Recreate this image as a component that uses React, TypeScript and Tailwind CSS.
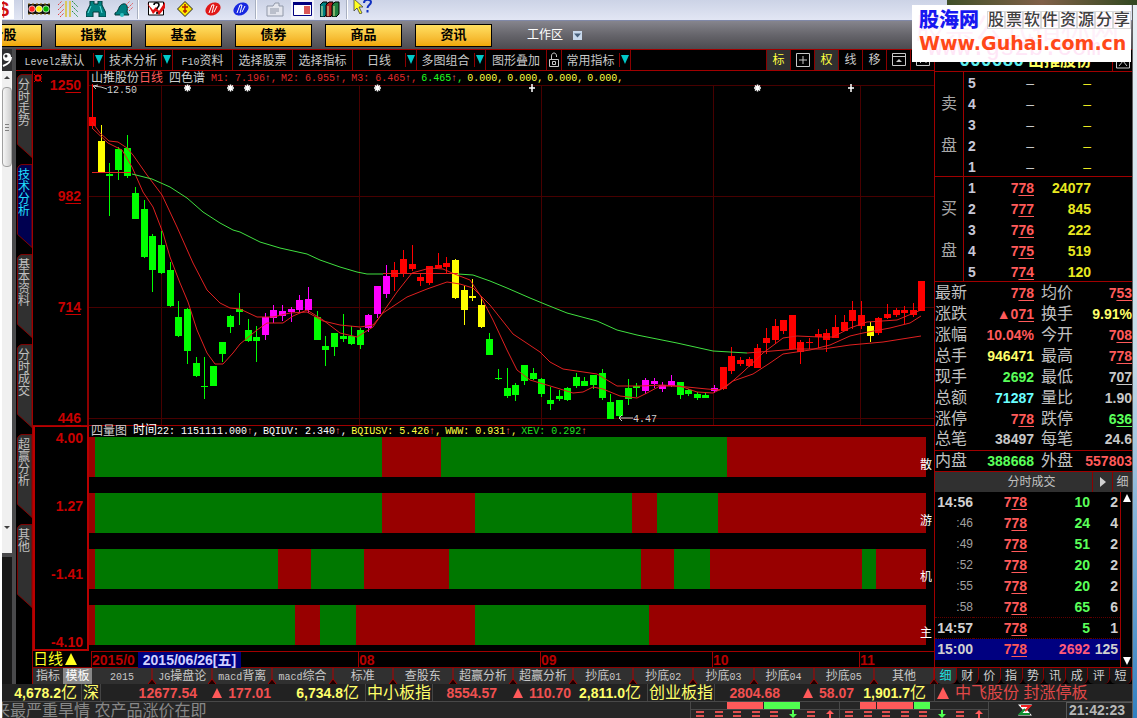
import { useState } from 'react'
import type { ReactNode } from 'react'

const RED = '#ff0000'
const GREEN = '#00ff00'
const PINK = '#ff00ff'
const YELLOW = '#ffff00'

type Candle = [high: number, open: number, close: number, low: number, color: string]

const candles: Candle[] = [
  [84, 117, 126, 128, RED], [125, 141, 173, 173, YELLOW], [163, 174, 176, 216, GREEN], [147, 149, 170, 180, GREEN],
  [135, 148, 176, 178, GREEN], [187, 193, 219, 219, GREEN], [200, 209, 257, 258, GREEN], [234, 236, 270, 292, GREEN],
  [231, 245, 273, 274, GREEN], [262, 270, 306, 307, GREEN], [301, 317, 336, 337, GREEN], [308, 309, 351, 364, GREEN],
  [357, 363, 376, 377, GREEN], [357, 386, 387, 399, GREEN], [366, 366, 386, 386, GREEN], [342, 342, 354, 362, GREEN],
  [315, 316, 327, 333, GREEN], [293, 309, 312, 325, GREEN], [319, 330, 341, 342, GREEN], [326, 337, 341, 362, GREEN],
  [313, 317, 335, 340, PINK], [305, 310, 318, 323, PINK], [305, 311, 316, 321, PINK], [307, 309, 312, 322, PINK],
  [295, 300, 310, 313, PINK], [287, 299, 310, 313, PINK], [311, 317, 340, 340, GREEN], [336, 346, 350, 366, GREEN],
  [333, 333, 347, 356, GREEN], [314, 336, 339, 342, GREEN], [326, 336, 344, 345, GREEN], [328, 330, 345, 349, GREEN],
  [314, 315, 328, 332, PINK], [286, 286, 314, 318, PINK], [265, 276, 294, 298, PINK], [262, 270, 277, 291, RED],
  [250, 259, 274, 277, RED], [245, 264, 269, 271, RED], [273, 277, 281, 286, RED], [266, 266, 283, 285, RED],
  [253, 265, 268, 268, RED], [257, 263, 267, 273, RED], [259, 260, 298, 299, YELLOW], [286, 290, 310, 325, YELLOW],
  [279, 296, 298, 301, YELLOW], [297, 305, 327, 328, YELLOW], [333, 339, 355, 355, GREEN], [369, 378, 379, 380, GREEN],
  [368, 388, 396, 398, GREEN], [383, 385, 395, 401, GREEN], [365, 365, 381, 385, GREEN], [368, 373, 379, 380, GREEN],
  [378, 379, 394, 397, GREEN], [387, 400, 404, 410, GREEN], [390, 396, 399, 401, GREEN], [387, 388, 400, 401, GREEN],
  [373, 377, 386, 388, GREEN], [377, 381, 386, 386, GREEN], [375, 375, 385, 389, GREEN], [369, 373, 398, 400, GREEN],
  [394, 402, 419, 419, GREEN], [400, 400, 416, 418, GREEN], [379, 388, 399, 405, GREEN], [383, 386, 388, 397, GREEN],
  [378, 380, 391, 394, PINK], [378, 381, 384, 388, PINK], [382, 385, 389, 392, PINK], [375, 381, 386, 387, PINK],
  [382, 382, 395, 399, GREEN], [389, 390, 394, 396, GREEN], [392, 394, 398, 400, GREEN], [393, 395, 398, 398, GREEN],
  [385, 388, 391, 393, PINK], [367, 367, 389, 390, RED], [347, 356, 371, 374, RED], [357, 360, 364, 366, RED],
  [357, 359, 366, 367, RED], [344, 348, 368, 368, RED], [328, 338, 343, 354, RED], [319, 326, 340, 344, RED],
  [320, 320, 331, 334, RED], [315, 315, 349, 349, RED], [340, 342, 352, 364, RED], [338, 342, 343, 349, RED],
  [329, 334, 337, 348, RED], [329, 333, 340, 352, RED], [315, 327, 338, 338, RED], [315, 322, 331, 331, RED],
  [301, 310, 321, 329, RED], [301, 315, 326, 329, RED], [322, 326, 336, 342, YELLOW], [317, 318, 333, 335, RED],
  [304, 314, 318, 319, RED], [308, 310, 315, 317, RED], [306, 310, 313, 324, RED], [303, 310, 315, 317, RED],
  [281, 281, 311, 311, RED],
]

const fastLine =
  '92,128 108,143 122,150 132,167 143,192 153,207 163,233 170,257 180,283 188,302 197,330 207,353 215,364 223,364 233,353 240,344 257,330 267,323 283,323 293,316 307,310 323,320 340,333 357,337 373,327 383,312 397,292 412,273 430,268 443,269 457,275 470,280 480,295 493,320 507,350 517,370 530,380 557,388 573,393 583,392 593,387 603,389 620,396 637,398 647,393 660,386 680,386 697,392 713,393 727,386 743,372 763,353 783,338 797,336 820,337 833,337 850,328 867,322 897,320 921,310'
const slowLine =
  '92,122 100,133 109,141 118,142 127,148 133,155 147,175 162,195 177,227 193,263 207,290 220,303 230,308 240,309 257,317 273,317 290,313 307,312 323,321 340,325 360,327 373,325 383,313 407,297 427,289 447,282 460,284 473,288 490,305 513,334 540,352 550,362 563,369 597,374 617,386 640,386 663,385 687,387 707,389 720,390 733,381 753,374 770,363 783,354 810,350 830,345 850,336 863,333 890,328 910,323 921,316'
const greenLine1 =
  '132,174 152,179 170,187 187,198 203,212 220,223 233,230 240,232 260,242 280,248 307,254 320,260 340,267 357,272 367,274 383,274'
const greenLine2 =
  '458,274 473,275 490,281 507,288 530,298 547,305 567,313 597,321 617,330 637,335 677,343 713,351 747,353'

const gridX = [161, 359, 541, 713, 860]
const gridY = [85, 196, 307, 418]

// widths of the strips, starting with green and alternating with red
const strips = [
  { label: '散户', parts: [287, 59, 286, 199] },
  { label: '游资', parts: [287, 93, 157, 25, 61, 208] },
  { label: '机构', parts: [183, 33, 53, 85, 192, 33, 36, 152, 14, 50] },
  { label: '主力', parts: [200, 25, 36, 119, 174, 277] },
]

const markets = ['个股', '指数', '基金', '债券', '商品', '资讯']

const menuItems = [
  { label: 'Level2默认', width: 'w-[89px]', arrow: true },
  { label: '技术分析', width: 'w-[68px]', arrow: true },
  { label: 'F10资料', width: 'w-[60px]' },
  { label: '选择股票', width: 'w-[60px]' },
  { label: '选择指标', width: 'w-[60px]' },
  { label: '日线', width: 'w-[64px]', arrow: true },
  { label: '多图组合', width: 'w-[69px]', arrow: true },
  { label: '图形叠加', width: 'w-[61px]' },
  { label: 'lock', width: 'w-[15px]' },
  { label: '常用指标', width: 'w-[69px]', arrow: true },
]

const sideTabs = ['分时走势', '技术分析', '基本资料', '分时成交', '超赢分析', '其他']

const templateTabs = [
  '2015', 'JG操盘论', 'macd背离', 'macd综合', '标准', '查股东', '超赢分析', '超赢分析',
  '抄底01', '抄底02', '抄底03', '抄底04', '抄底05', '其他',
]

const quoteTabs = ['细', '财', '价', '指', '势', '讯', '成', '评', '短']

const bids = [
  ['1', '778', '24077'],
  ['2', '777', '845'],
  ['3', '776', '222'],
  ['4', '775', '519'],
  ['5', '774', '120'],
]

const C = {
  red: 'text-[#ff5a5a]',
  yellow: 'text-[#ffff6a]',
  green: 'text-[#5aff5a]',
  cyan: 'text-[#6affff]',
  gray: 'text-[#c8c8c8]',
}

const stats = [
  ['最新', '778', C.red, true, '均价', '753', C.red, true],
  ['涨跌', '▲071', C.red, true, '换手', '9.91%', C.yellow, false],
  ['涨幅', '10.04%', C.red, false, '今开', '708', C.red, true],
  ['总手', '946471', C.yellow, false, '最高', '778', C.red, true],
  ['现手', '2692', C.green, false, '最低', '707', C.gray, true],
  ['总额', '71287', C.cyan, false, '量比', '1.90', C.gray, false],
  ['涨停', '778', C.red, true, '跌停', '636', C.green, true],
  ['总笔', '38497', C.gray, false, '每笔', '24.6', C.gray, false],
  ['内盘', '388668', C.green, false, '外盘', '557803', C.red, false],
] as const

const ticks = [
  ['14:56', '10', '2'],
  [':46', '24', '4'],
  [':49', '51', '2'],
  [':52', '20', '2'],
  [':55', '20', '2'],
  [':58', '65', '6'],
  ['14:57', '5', '1'],
  ['15:00', '2692', '125'],
]

// Chinese at 12px, latin characters half as wide
function Label({ text }: { text: string }) {
  return (
    <span className="whitespace-nowrap text-xs">
      {text.split(/([\x20-\x7e]+)/).filter(Boolean).map((part, i) =>
        /[\x20-\x7e]/.test(part) ? (
          <span key={i} className="font-['Liberation_Mono',monospace] text-[10px]">{part}</span>
        ) : (
          part
        )
      )}
    </span>
  )
}

function Cents({ value }: { value: string }) {
  return (
    <>
      {value.slice(0, -2)}
      <span className="underline decoration-1 underline-offset-2">{value.slice(-2)}</span>
    </>
  )
}

function DownArrow() {
  return (
    <svg className="h-2.5 w-2" viewBox="0 0 8 10">
      <path d="M0 0h8L4 9z" fill="#00c8c8" />
    </svg>
  )
}

function ToolIcon({ label, width, children }: { label: string; width: number; children: ReactNode }) {
  return (
    <button aria-label={label} className="h-4 shrink-0">
      <svg width={width} height="16" viewBox={`0 0 ${width} 16`}>{children}</svg>
    </button>
  )
}

function ToolSep() {
  return <span className="h-5 w-0.5 border-l border-[#a8b0c0] bg-white" />
}

function Toolbar() {
  return (
    <div className="flex h-[21px] items-center overflow-hidden border-b border-[#8088a8] bg-gradient-to-b from-[#ccd3e6] to-[#e2e6f4] pb-0.5">
      <div className="flex h-5 w-3 items-center bg-white text-xl font-black leading-5 text-[#d01010]">
        <span className="-ml-1">$</span>
      </div>
      <span className="w-2" />
      <ToolSep />
      <div className="flex items-center gap-2 pl-1">
        <ToolIcon label="红绿灯" width={22}>
          <path d="M0 3h22v10H0z" fill="#101010" />
          <path d="M0 3h22M0 13h22" stroke="#806000" strokeDasharray="2 2" />
          <circle cx="4" cy="8" r="3.2" fill="#ff2020" stroke="#fff" strokeWidth=".7" />
          <circle cx="11" cy="8" r="3.2" fill="#f8f000" stroke="#fff" strokeWidth=".7" />
          <circle cx="18" cy="8" r="3.2" fill="#00b000" stroke="#fff" strokeWidth=".7" />
        </ToolIcon>
        <ToolIcon label="条纹" width={20}>
          <path d="M0 4l4-4M0 9l6-6M0 14l6-6M2 16l4-4" stroke="#e04040" strokeDasharray="2 1" />
          <path d="M8 0v16M12 0v16" stroke="#d8c860" strokeWidth="2" />
          <path d="M14 0l6 6M14 5l6 6M14 10l6 6" stroke="#209040" strokeDasharray="2 1" />
        </ToolIcon>
        <ToolIcon label="望远镜" width={20}>
          <path d="M4 0h4v3h4V0h4v4l4 8v4h-7v-5H7v5H0v-4l4-8z" fill="#008080" stroke="#003838" />
          <path d="M5 5l-3 7M14 5l2 7" stroke="#60e0e0" />
        </ToolIcon>
        <ToolIcon label="铃" width={19}>
          <path d="M1 12c4-1 3-8 8-9 4-1 5 3 4 8l2 3H1z" fill="#008080" stroke="#003838" />
          <circle cx="8" cy="14" r="2" fill="#30c0c0" />
          <path d="M12 4l4-4M14 7l5-5M15 10l4-4" stroke="#e05050" strokeDasharray="2 1" />
        </ToolIcon>
      </div>
      <span className="w-1" />
      <ToolSep />
      <div className="flex items-center gap-3 pl-2">
        <ToolIcon label="疑问走势" width={18}>
          <path d="M1.500 1h15v13h-15z" fill="#fff" stroke="#000" />
          <path d="M0 2l6 7 3-3 3 4 6-9v6l-6 7-3-4-3 3z" fill="#e01010" />
          <path d="M7 4c0-3 5-3 5 0 0 2-2 2-2 4M10 11v2" fill="none" stroke="#000" strokeWidth="1.6" />
        </ToolIcon>
        <ToolIcon label="菱形" width={16}>
          <path d="M8 .5L15.500 8 8 15.500.5 8z" fill="#ffe800" stroke="#202020" />
          <path d="M8 3v9M5 6h6M6 10h4" stroke="#b02000" strokeWidth="1.500" />
        </ToolIcon>
        <ToolIcon label="红色标志" width={16}>
          <ellipse cx="8" cy="8" rx="8" ry="6" transform="rotate(-30 8 8)" fill="#e01818" />
          <path d="M4 12l3-8h2l-2 8M9 11l3-6" stroke="#fff" fill="none" />
        </ToolIcon>
        <ToolIcon label="蓝色标志" width={16}>
          <ellipse cx="8" cy="8" rx="8" ry="6" transform="rotate(-30 8 8)" fill="#1828e0" />
          <path d="M4 12l3-8h2l-2 8M9 11l3-6" stroke="#fff" fill="none" />
        </ToolIcon>
      </div>
      <span className="w-1.5" />
      <ToolSep />
      <div className="flex items-center gap-1.5 pl-2">
        <ToolIcon label="便签" width={20}>
          <path d="M2 5h6l2-3h4v3h4v10H2z" fill="#e4e6ee" stroke="#9098a8" />
          <path d="M5 8h9M5 10h9M5 12h6" stroke="#9098a8" />
        </ToolIcon>
        <div className="flex h-5 items-center bg-[#f2f4fa] px-0.5">
          <ToolIcon label="窗口" width={19}>
            <path d="M.5 1.500h18v13H.5z" fill="#fff" stroke="#000080" />
            <path d="M0 1h19v3H0z" fill="#000080" />
            <path d="M11 6h6M11 8h6M11 10h6M11 12h6" stroke="#d02020" strokeWidth="1.500" />
          </ToolIcon>
        </div>
        <ToolIcon label="书" width={20}>
          <path d="M0 4l3-3h4v12l-3 3H0z" fill="#008080" stroke="#000" />
          <path d="M6 4l3-3h4v12l-3 3H6z" fill="#b02020" stroke="#000" />
          <path d="M12 4l3-3h4v12l-3 3h-4z" fill="#208040" stroke="#000" />
          <path d="M2 5v10M8 5v10M14 5v10" stroke="#e8e8a0" />
        </ToolIcon>
      </div>
      <span className="w-1.5" />
      <ToolSep />
      <div className="pl-1">
        <ToolIcon label="帮助" width={22}>
          <path d="M2 1v12l3-3 3 6 2-1-3-6h4z" fill="#ffff20" stroke="#404040" strokeWidth=".8" />
          <path d="M12 5c0-4 7-4 7-1 0 3-3.500 3-3.500 6M15.500 12v2.500" fill="none" stroke="#1030c0" strokeWidth="2" />
        </ToolIcon>
      </div>
    </div>
  )
}

function MarketBar() {
  return (
    <div className="flex h-7 items-center gap-[13px] overflow-hidden bg-gradient-to-b from-[#86858d] via-[#66656b] to-[#4c4b50]">
      {markets.map((m, i) => (
        <button
          key={m}
          className={`h-[23px] w-[77px] shrink-0 border border-black bg-gradient-to-b from-[#ffe060] to-[#f0a800] text-[13px] font-bold text-black ${i === 0 ? '-ml-[37px]' : ''}`}
        >
          {m}
        </button>
      ))}
      <button className="ml-[22px] flex items-center gap-2.5 text-xs text-white">
        工作区
        <svg className="h-[9px] w-[9px]" viewBox="0 0 9 9">
          <path d="M0 0h9v9H0z" fill="#c8d8ec" />
          <path d="M1 2.500h7L4.500 6.500z" fill="#48607c" />
        </svg>
      </button>
    </div>
  )
}

// strip of the window behind, on the left edge
function LeftStrip() {
  return (
    <div className="flex w-3.5 shrink-0 flex-col border-r-4 border-[#4a4a4c] bg-[#181818]">
      <div className="flex h-[22px] items-center justify-center bg-[#303032]">
        <svg className="h-4 w-2.5" viewBox="0 0 10 16">
          <circle cx="5" cy="5" r="4" fill="#fff" />
          <path d="M9 5c0 5-3 7-8 9" stroke="#fff" strokeWidth="2" fill="none" />
          <circle cx="4" cy="4" r="1.500" fill="#303032" />
        </svg>
      </div>
      <div className="flex h-[482px] flex-col items-stretch bg-[#f0f0f0]">
        <svg className="h-4 w-full" viewBox="0 0 10 16"><path d="M5 5l3 3H2z" fill="#404040" /></svg>
        <div className="flex h-20 flex-col items-center justify-center gap-0.5 rounded-sm border border-[#a0a0a0] bg-gradient-to-r from-[#f6f6f6] to-[#cfcfcf]">
          <span className="h-px w-1 bg-[#808080]" />
          <span className="h-px w-1 bg-[#808080]" />
          <span className="h-px w-1 bg-[#808080]" />
        </div>
        <svg className="mt-auto h-8 w-full" viewBox="0 0 10 32"><path d="M5 8L2 5h6z" fill="#404040" /></svg>
      </div>
      <div className="h-1 bg-[#4a4a4c]" />
    </div>
  )
}

function MenuBar() {
  const cell = 'flex h-full w-6 items-center justify-center border-l border-[#8c0000] text-xs'
  return (
    <div className="flex h-[22px] items-center border-y border-[#a00000] text-[#c8c8c8]">
      {menuItems.map((m) => (
        <button key={m.label} className={`flex h-full shrink-0 items-center border-r border-[#8c0000] ${m.width}`}>
          {m.label === 'lock' ? (
            <svg className="h-4 w-3.5" viewBox="0 0 14 16" fill="none" stroke="#c8c8c8">
              <path d="M2.500 7.500h9v7h-9zM4.500 7V4c0-4 5-4 5 0v1M5.500 9.500h3v3h-3z" />
            </svg>
          ) : (
            <span className="flex-1 text-center"><Label text={m.label} /></span>
          )}
          {m.arrow && (
            <span className="flex h-3.5 items-center border-l border-[#8c0000] px-px">
              <DownArrow />
            </span>
          )}
        </button>
      ))}
      <div className="ml-auto flex h-full">
        <button className={`${cell} bg-[#303030] text-[#ffff40]`}>标</button>
        <button className={cell} aria-label="十字">
          <svg className="h-3.5 w-3.5" viewBox="0 0 14 14" fill="none" stroke="#c8c8c8">
            <path d="M.5.5h13v13H.5zM7 3v8M3 7h8" />
          </svg>
        </button>
        <button className={`${cell} bg-[#303030] text-[#ffff40]`}>权</button>
        <button className={cell}>线</button>
        <button className={cell}>移</button>
        <button className={cell} aria-label="上移">
          <svg className="h-3.5 w-3.5" viewBox="0 0 14 14" fill="none" stroke="#c8c8c8">
            <path d="M.5.5h13v12H.5zM.5 3.500h13" />
            <path d="M7 6l3 3H4z" fill="#c8c8c8" stroke="none" />
          </svg>
        </button>
        <button className={cell} aria-label="展开">
          <svg className="h-3.5 w-3.5" viewBox="0 0 14 14" fill="none" stroke="#c8c8c8">
            <path d="M.5.5h13v12H.5zM4 10l6-6v6" />
          </svg>
        </button>
      </div>
    </div>
  )
}

function SideTabs() {
  const [active, setActive] = useState(1)
  return (
    <nav className="flex w-[17px] shrink-0 flex-col border-r border-[#a00000]">
      {sideTabs.map((t, i) => (
        <button key={t} onClick={() => setActive(i)} className="relative flex h-[90px] flex-col items-center pt-2">
          <svg className="absolute inset-0 h-full w-full" viewBox="0 0 17 90">
            <path
              d="M1.500 75V5q1-3 4-4H17V89z"
              fill={i === active ? '#000050' : '#303030'}
              stroke="#8c0000"
            />
          </svg>
          <span className={`relative flex flex-col text-xs leading-3 ${i === active ? 'text-[#20e0ff]' : 'text-[#c0c0c0]'}`}>
            {t.split('').map((ch, k) => <span key={k}>{ch}</span>)}
          </span>
        </button>
      ))}
    </nav>
  )
}

function Up() {
  return <span className="font-bold text-[#ff6a6a]">↑</span>
}

function PriceChart() {
  return (
    <div className="flex">
      <div className="flex w-14 shrink-0 flex-col justify-between border-r-2 border-[#8c0000] pr-1.5 pt-[7px] text-right text-sm font-bold leading-[14px] text-[#c80000]">
        {['1250', '982', '714', '446'].map((v) => (
          <span key={v}><Cents value={v} /></span>
        ))}
      </div>
      <div className="relative min-w-0 flex-1">
        <svg className="block h-auto w-full" viewBox="89 71 845 354">
          <g stroke="#480000" shapeRendering="crispEdges">
            {gridX.map((x) => <path key={x} d={`M${x} 85V425`} />)}
            {gridY.map((y) => <path key={y} d={`M89 ${y}H934`} />)}
          </g>
          {candles.map(([high, top, bottom, low, color], i) => {
            const x = Math.round(92 + i * 8.64)
            return (
              <g key={i} fill={color} shapeRendering="crispEdges">
                <rect x={x} y={high} width="1" height={low - high} />
                <rect x={x - 3} y={top} width="7" height={bottom - top} />
              </g>
            )
          })}
          <g fill="none" stroke="#e02020">
            <polyline points={fastLine} />
            <polyline points={slowLine} />
            <path d="M92 172.500H131M383 273.500H458" />
            <polyline points="747,353 760,352 797,349 823,349 850,345 883,342 921,336" />
          </g>
          <g fill="none" stroke="#40e040">
            <polyline points={greenLine1} />
            <polyline points={greenLine2} />
          </g>
          <g stroke="#fff" strokeWidth="1.500">
            {[187, 230, 247, 377, 757].map((x) => (
              <path key={x} d={`M${x - 3} 88h7M${x + 0.5} 84.500v7M${x - 2} 85.500l5 5M${x - 2} 90.500l5-5`} />
            ))}
            {[532, 851].map((x) => <path key={x} d={`M${x - 3} 88h6M${x} 84v8`} />)}
          </g>
          <g fill="none" stroke="#c8c8c8">
            <path d="M93 86l5-1M93 86l3 3M93 86l8 1 6 2M619 418h14M619 418l3-3M619 418l3 3" />
          </g>
          <g fill="#d0d0d0" className="font-['Liberation_Mono',monospace] text-[10px]">
            <text x="107" y="93">12.50</text>
            <text x="633" y="422">4.47</text>
          </g>
        </svg>
        <div className="absolute left-0.5 top-0 flex items-center gap-1 whitespace-nowrap font-['Liberation_Mono','Noto_Sans_CJK_SC',monospace] text-[10px] leading-4 text-[#e02828]">
          <span className="mr-0.5 text-xs leading-4 text-[#d0d0d0]">
            山推股份<span className="text-[#ff5a5a]">日线</span>
          </span>
          <span className="mr-0.5 text-xs leading-4 text-[#d0d0d0]">四色谱</span>
          <span>M1: 7.196<Up />,</span>
          <span>M2: 6.955<Up />,</span>
          <span>M3: 6.465<Up />,</span>
          <span className="text-[#20ff20]">6.465<Up />,</span>
          {[0, 1, 2, 3].map((n) => <span key={n} className="text-[#ffff40]">0.000,</span>)}
        </div>
        <svg className="absolute -left-14 top-0.5 h-2.5 w-2.5" viewBox="0 0 10 10" fill="none" stroke="#e00000">
          <circle cx="5" cy="5" r="2.500" strokeWidth="2" />
          <path d="M1 1l2 2M9 1L7 3M1 9l2-2M9 9L7 7" />
        </svg>
      </div>
    </div>
  )
}

function StripChart() {
  return (
    <div className="flex h-[226px] border-t border-[#a00000]">
      <div className="flex w-14 shrink-0 flex-col justify-between border-2 border-t border-[#b80000] pr-1 pt-1 text-right text-sm font-bold leading-[14px] text-[#c80000]">
        {['4.00', '1.27', '-1.41', '-4.10'].map((v) => <span key={v}>{v}</span>)}
      </div>
      <div className="min-w-0 flex-1">
        <div className="flex h-[11px] items-center gap-1 whitespace-nowrap pl-0.5 font-['Liberation_Mono','Noto_Sans_CJK_SC',monospace] text-[10px] leading-3 text-white">
          <span className="mr-0.5 text-xs leading-3 text-[#d0d0d0]">四量图</span>
          <span><span className="text-xs leading-3">时间</span>22: 1151111.000<Up />,</span>
          <span>BQIUV: 2.340<Up />,</span>
          <span className="text-[#ffff40]">BQIUSV: 5.426<Up />,</span>
          <span className="text-[#ffff40]">WWW: 0.931<Up />,</span>
          <span className="text-[#20e020]">XEV: 0.292<Up /></span>
        </div>
        <div className="flex flex-col gap-4">
          {strips.map((s) => (
            <div key={s.label} className="relative flex h-10 pr-2">
              <span className="w-1.5 bg-[#980000]" />
              {s.parts.map((w, i) => (
                <span key={i} className={i % 2 ? 'bg-[#980000]' : 'bg-[#007800]'} style={{ flexGrow: w }} />
              ))}
              <span className="absolute right-0.5 top-5 w-3 overflow-hidden whitespace-nowrap text-xs leading-4 text-white">
                {s.label}
              </span>
            </div>
          ))}
        </div>
      </div>
    </div>
  )
}

function TimeAxis() {
  return (
    <div className="flex h-[17px] items-center border-b border-[#8c0000] text-sm leading-4">
      <span className="flex w-[58px] shrink-0 items-center gap-0.5 text-[15px] text-[#ffff20]">
        日线
        <svg className="h-3 w-3" viewBox="0 0 12 12"><path d="M6 0l6 12H0z" fill="#ffff20" /></svg>
      </span>
      <div className="relative flex h-full flex-1 border-l border-t border-[#a00000] font-bold text-[#b80000]">
        <span className="w-[46px]">2015/0</span>
        <span className="flex h-4 w-[103px] items-center justify-center whitespace-nowrap bg-[#000080] text-sm text-[#d0d0ff]">
          2015/06/26[五]
        </span>
        <span className="w-[117px]" />
        <span className="w-[182px] border-l border-[#a00000]">08</span>
        <span className="w-[172px] border-l border-[#a00000]">09</span>
        <span className="w-[147px] border-l border-[#a00000]">10</span>
        <span className="flex-1 border-l border-[#a00000]">11</span>
      </div>
    </div>
  )
}

function TemplateTabs() {
  return (
    <div className="flex h-4 items-center bg-[#303030] text-[#c8c8c8]">
      <button className="flex h-full w-[30px] shrink-0 items-center justify-center"><Label text="指标" /></button>
      <button className="flex h-full w-[29px] shrink-0 items-center justify-center bg-[#888] text-white"><Label text="模板" /></button>
      {templateTabs.map((t, i) => (
        <button key={i} className="relative flex h-full min-w-0 flex-1 items-center justify-center">
          <Label text={t} />
          <svg className="absolute -right-1 top-0 h-4 w-2" viewBox="0 0 8 16">
            <path d="M4 11l4 5H0z" fill="#200000" />
            <path d="M4 0v11l4 5M4 11l-4 5" fill="none" stroke="#b00000" />
          </svg>
        </button>
      ))}
    </div>
  )
}

function BookRow({ level, price, volume }: { level: string; price: string; volume: string }) {
  return (
    <tr className="h-[21px]">
      <td className="w-5 pl-1 text-[#c8c8d8]">{level}</td>
      <td className="text-right text-[#ff5a5a]">
        {price ? <Cents value={price} /> : <span className="font-normal text-[#c8c8c8]">–</span>}
      </td>
      <td className="w-[57px] text-right text-[#e8e820]">{volume || <span className="font-normal">–</span>}</td>
      <td className="w-[41px]" />
    </tr>
  )
}

function BookSide({ name, rows }: { name: string; rows: string[][] }) {
  return (
    <div className="flex h-[105px] border-b border-[#a00000]">
      <div className="flex w-[29px] shrink-0 flex-col items-center justify-center gap-[21px] border-r border-[#a00000] text-base leading-[21px] text-[#a8a8a8]">
        {name.split('').map((c) => <span key={c}>{c}</span>)}
      </div>
      <table className="flex-1 border-collapse text-sm font-bold leading-5">
        <tbody>
          {rows.map((r) => <BookRow key={r[0]} level={r[0]} price={r[1]} volume={r[2]} />)}
        </tbody>
      </table>
    </div>
  )
}

function QuotePanel() {
  return (
    <aside className="flex w-[198px] shrink-0 flex-col border-l border-[#a00000]">
      <div className="flex h-[23px] items-center justify-end gap-1 overflow-hidden border-y border-[#a00000] text-lg font-bold leading-6">
        <span className="font-['Liberation_Mono',monospace] text-[#60f0f0]">000680</span>
        <span className="mr-4 text-base text-[#ffff60]">山推股份</span>
        <span className="flex h-full w-5 items-center justify-center border-l border-[#a00000]">
          <svg className="h-4 w-4" viewBox="0 0 16 16" fill="none" stroke="#c8c8c8">
            <path d="M1.500 1v14h13V1M4 13l4-5 4 5" />
          </svg>
        </span>
      </div>
      <BookSide name="卖盘" rows={['5', '4', '3', '2', '1'].map((n) => [n, '', ''])} />
      <BookSide name="买盘" rows={bids} />
      <table className="w-full border-b border-[#a00000] text-sm font-bold leading-5">
        <tbody>
          {stats.map(([a, av, ac, au, b, bv, bc, bu]) => (
            <tr key={a} className={`h-[21px] ${a === '内盘' ? 'border-t border-[#a00000]' : ''}`}>
              <th className="w-8 text-left text-base font-normal leading-5 text-[#c0c0c0]">{a}</th>
              <td className={`w-[67px] text-right ${ac}`}>{au ? <Cents value={av} /> : av}</td>
              <th className="whitespace-nowrap pl-[7px] text-left text-base font-normal leading-5 text-[#c0c0c0]">{b}</th>
              <td className={`text-right ${bc}`}>{bu ? <Cents value={bv} /> : bv}</td>
            </tr>
          ))}
        </tbody>
      </table>
      <div className="flex h-5 items-center bg-[#303030] text-xs text-[#c0c0c0]">
        <span className="flex-1 pl-9 text-center">分时成交</span>
        <button aria-label="播放" className="flex h-full w-5 items-center justify-center border-l border-[#8c0000]">
          <svg className="h-2.5 w-1.5" viewBox="0 0 6 10"><path d="M0 0l6 5-6 5z" fill="#d0d0d0" /></svg>
        </button>
        <button className="h-full w-5 border-l border-[#8c0000]">细</button>
      </div>
      <div className="flex flex-1">
        <table className="h-[168px] flex-1 text-sm font-bold">
          <tbody>
            {ticks.map(([time, vol, n]) => {
              const last = time === '15:00'
              return (
                <tr
                  key={time}
                  className={`h-[21px] ${last ? 'bg-[#000080]' : ''} ${time === '14:57' ? 'border-y border-dotted border-[#600000]' : ''}`}
                >
                  <td className={`w-[38px] text-right ${time[0] === ':' ? 'text-xs font-normal text-[#a0a0a0]' : 'text-[#d0d0d0]'}`}>{time}</td>
                  <td className="w-[54px] text-right text-[#ff5a5a]"><Cents value="778" /></td>
                  <td className={`text-right ${last ? 'text-[#ff5a7a]' : 'text-[#5aff5a]'}`}>{vol}</td>
                  <td className="w-[30px] pr-0.5 text-right text-[#d0d0d0]">{n}</td>
                </tr>
              )
            })}
          </tbody>
        </table>
        <div className="flex w-3 flex-col items-center justify-between border-l border-[#a00000] py-0.5">
          <svg className="h-2 w-2" viewBox="0 0 8 8"><path d="M4 0l4 8H0z" fill="#fff" /></svg>
          <svg className="h-2 w-2" viewBox="0 0 8 8"><path d="M4 8L0 0h8z" fill="#fff" /></svg>
        </div>
      </div>
      <div className="flex h-[17px] border-t border-[#a00000]">
        {quoteTabs.map((t, i) => (
          <button
            key={t}
            className={`h-4 flex-1 rounded-b-md border-r border-[#8c0000] text-xs leading-4 ${i === 0 ? 'bg-[#303030] text-[#20e0e0]' : 'bg-[#181818] text-[#d0d0d0]'}`}
          >
            {t}
          </button>
        ))}
      </div>
    </aside>
  )
}

function IndexCell({ value, change, width }: { value: string; change: string; width: string }) {
  return (
    <div className={`flex shrink-0 items-center justify-end gap-1 text-sm font-bold text-[#f05050] ${width}`}>
      <span className="flex-1 text-right">{value}</span>
      <span className="flex w-[70px] items-center justify-end gap-1.5">
        <svg className="h-2.5 w-2.5" viewBox="0 0 10 10"><path d="M5 0l5 10H0z" fill="#ff5a5a" /></svg>
        {change}
      </span>
    </div>
  )
}

function Amount({ value, width }: { value: string; width: string }) {
  return (
    <span className={`flex shrink-0 items-center justify-end text-sm font-bold text-[#ffff6a] ${width}`}>
      {value}
      <span className="text-base font-normal leading-4">亿</span>
    </span>
  )
}

function IndexName({ name, width }: { name: string; width: string }) {
  return (
    <span className={`shrink-0 whitespace-nowrap border-x border-[#444] text-center text-base leading-[17px] text-[#ffff6a] ${width}`}>
      {name}
    </span>
  )
}

function IndexBar() {
  return (
    <div className="flex h-[18px] items-center border-b border-[#484848] bg-[#222]">
      <Amount value="4,678.2" width="w-[75px]" />
      <span className="w-1" />
      <IndexName name="深" width="w-5" />
      <IndexCell value="12677.54" change="177.01" width="w-[170px]" />
      <Amount value="6,734.8" width="w-[88px]" />
      <span className="w-1.5" />
      <IndexName name="中小板指" width="w-[68px]" />
      <IndexCell value="8554.57" change="110.70" width="w-[138px]" />
      <Amount value="2,811.0" width="w-[70px]" />
      <span className="w-1.5" />
      <IndexName name="创业板指" width="w-[68px]" />
      <IndexCell value="2804.68" change="58.07" width="w-[139px]" />
      <Amount value="1,901.7" width="w-[72px]" />
      <span className="ml-2 flex items-center gap-1.5 whitespace-nowrap border-l border-[#444] pl-0.5 text-base leading-[17px] text-[#e04848]">
        <svg className="h-3 w-3" viewBox="0 0 12 12"><path d="M6 0l6 12H0z" fill="#ff5a5a" /></svg>
        中飞股份 封涨停板
      </span>
    </div>
  )
}

function Meter({ bar, marks, width }: { bar: ReactNode; marks: string; width: string }) {
  return (
    <div className={`flex shrink-0 flex-col border-l border-[#484848] ${width}`}>
      <div className="flex h-[7px] gap-px">{bar}</div>
      <div className="flex h-[9px] items-center justify-around border-t border-[#484848]">
        {marks.split('').map((m, i) => (
          <svg key={i} className="h-2 w-2" viewBox="0 0 8 8">
            {m === '=' && <path d="M0 2h8M0 6h8" stroke="#e05050" strokeWidth="2" />}
            {m === 'd' && <path d="M3 0h2v4h3L4 8 0 4h3z" fill="#50ff50" />}
            {m === 'u' && <path d="M3 8h2V4h3L4 0 0 4h3z" fill="#ff5a5a" />}
          </svg>
        ))}
      </div>
    </div>
  )
}

function Footer() {
  return (
    <div className="flex h-4 overflow-hidden bg-[#262626]">
      <div className="flex-1 overflow-hidden whitespace-nowrap text-base leading-[18px] text-[#888]">
        <span className="-ml-2">来最严重旱情 农产品涨价在即</span>
      </div>
      <Meter
        width="w-[149px]"
        marks="=====d=u"
        bar={<><span className="ml-9 w-9 bg-[#ff5a5a]" /><span className="w-9 bg-[#50ff50]" /></>}
      />
      <Meter
        width="w-[149px]"
        marks="=====d=u"
        bar={<><span className="ml-5 w-4 bg-[#ff5a5a]" /><span className="w-9 bg-[#ff5a5a]" /><span className="w-4 bg-[#50ff50]" /></>}
      />
      <div className="flex w-[78px] shrink-0 items-center border-l border-[#484848] pl-7">
        <svg className="h-3 w-4" viewBox="0 0 16 12">
          <path d="M1 .5h14L10 6l5 5.500H1L6 6z" fill="#fff" />
          <path d="M4 2h9L8 7" fill="none" stroke="#f02020" strokeWidth="2" />
          <path d="M8 5l-5 5h10" fill="none" stroke="#109030" strokeWidth="2" />
        </svg>
      </div>
      <div className="w-[66px] shrink-0 border-l border-t border-[#585858] pl-0.5 text-sm font-bold leading-[14px] text-[#b8b8b8]">
        21:42:23
      </div>
    </div>
  )
}

function SiteBanner() {
  return (
    <div className="absolute right-1.5 top-[5px] h-[57px] w-[219px] overflow-hidden bg-white pl-[7px]">
      <span aria-hidden className="absolute left-1 top-2 whitespace-nowrap text-[29px] leading-8 text-[#fff0fa]">股票公式指标网</span>
      <span aria-hidden className="absolute left-4 top-7 font-['Liberation_Mono',monospace] text-2xl text-[#ffe6f6]">www.gszb.com</span>
      <div className="relative flex items-center gap-2 whitespace-nowrap pt-[3px]">
        <span className="text-xl font-black leading-6 text-[#1818f0]">股海网</span>
        <span className="flex text-base font-medium leading-[18px] text-[#404040]">
          {'股票软件资源分享'.split('').map((c) => (
            <span key={c} className="w-[18px] border border-[#d8d8d8] text-center leading-4">{c}</span>
          ))}
        </span>
      </div>
      <a href="#" className="relative block font-['DejaVu_Sans',sans-serif] text-[19px] font-bold leading-[22px] text-[#ff4818]">
        Www.Guhai.com.cn
      </a>
    </div>
  )
}

export default function App() {
  return (
    <div className="relative flex min-h-screen overflow-hidden bg-black font-['Liberation_Sans','Noto_Sans_CJK_SC',sans-serif]">
      <div className="w-0.5 shrink-0 bg-white" />
      <div className="flex min-w-0 flex-1 flex-col">
        <Toolbar />
        <MarketBar />
        <div className="flex">
          <LeftStrip />
          <div className="flex min-w-0 flex-1 flex-col">
            <MenuBar />
            <div className="flex flex-1">
              <SideTabs />
              <div className="min-w-0 flex-1">
                <PriceChart />
                <StripChart />
                <TimeAxis />
                <TemplateTabs />
              </div>
            </div>
          </div>
          <QuotePanel />
        </div>
        <IndexBar />
        <Footer />
      </div>
      <div className="w-[5px] shrink-0 border-l border-[#606060] bg-gradient-to-b from-[#e8f0f4] via-[#c4dce8] to-[#3080c0]" />
      <div className="absolute right-0 top-0 h-[5px] w-[190px] bg-gradient-to-r from-[#405028] via-[#806048] to-[#304820]" />
      <SiteBanner />
    </div>
  )
}
